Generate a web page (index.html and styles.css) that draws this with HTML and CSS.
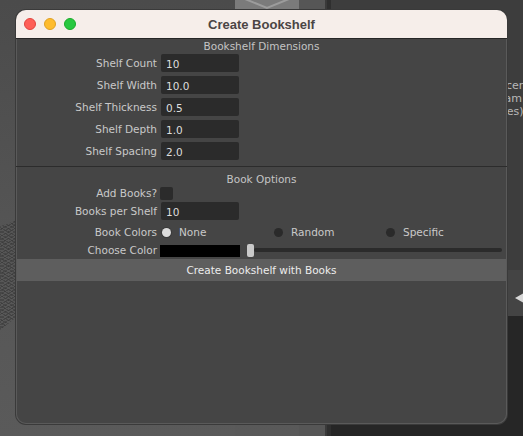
FILE: index.html
```html
<!DOCTYPE html>
<html>
<head>
<meta charset="utf-8">
<link rel="stylesheet" href="styles.css">
</head>
<body>
<div class="desktop">
  <div class="bg-left"></div>
  <div class="bg-mesh"></div>
  <div class="bg-tab">
    <svg width="64" height="10" viewBox="0 0 64 10"><polyline points="10,-1 32,8 54,-1" fill="none" stroke="#9c9c9c" stroke-width="2"/></svg>
  </div>
  <div class="bg-mid"></div>
  <div class="bg-divider"></div>
  <div class="bg-right">
    <div class="bg-right-top">
      <span class="side-text t1">Scen</span>
      <span class="side-text t2">Param</span>
      <span class="side-text t3">odes)</span>
    </div>
    <div class="bg-right-strip"><span class="arrow"></span></div>
    <div class="bg-right-bottom"></div>
  </div>

  <div class="window">
    <div class="titlebar">
      <div class="lights">
        <span class="light red"></span>
        <span class="light yellow"></span>
        <span class="light green"></span>
      </div>
      <div class="title">Create Bookshelf</div>
    </div>
    <div class="content">
      <div class="section-head first">Bookshelf Dimensions</div>
      <div class="form">
        <label class="lbl">Shelf Count</label><div class="field">10</div>
        <label class="lbl">Shelf Width</label><div class="field">10.0</div>
        <label class="lbl">Shelf Thickness</label><div class="field">0.5</div>
        <label class="lbl">Shelf Depth</label><div class="field">1.0</div>
        <label class="lbl">Shelf Spacing</label><div class="field">2.0</div>
      </div>
      <div class="separator"></div>
      <div class="section-head second">Book Options</div>
      <div class="row row-check">
        <label class="lbl">Add Books?</label><span class="checkbox"></span>
      </div>
      <div class="row row-field">
        <label class="lbl">Books per Shelf</label><div class="field">10</div>
      </div>
      <div class="row row-radio">
        <label class="lbl">Book Colors</label>
        <div class="radios">
          <span class="radio-opt"><span class="radio on"></span>None</span>
          <span class="radio-opt"><span class="radio"></span>Random</span>
          <span class="radio-opt"><span class="radio"></span>Specific</span>
        </div>
      </div>
      <div class="row row-color">
        <label class="lbl">Choose Color</label>
        <span class="swatch"></span>
        <div class="slider"><span class="handle"></span><span class="track"></span></div>
      </div>
      <div class="button">Create Bookshelf with Books</div>
    </div>
  </div>
</div>
</body>
</html>
```

FILE: styles.css
```css
* { box-sizing: border-box; }
html, body { margin: 0; padding: 0; }
body {
  width: 523px;
  height: 436px;
  overflow: hidden;
  background: #4f4f4f;
  font-family: "DejaVu Sans", "Liberation Sans", sans-serif;
}
.desktop {
  position: relative;
  width: 523px;
  height: 436px;
  overflow: hidden;
  background: linear-gradient(180deg, #4c4c4c 0%, #555 50%, #595959 100%);
}
.bg-left { position: absolute; left: 0; top: 0; width: 235px; height: 436px; background: linear-gradient(180deg, #4b4b4b, #565656 60%, #5a5a5a); }
.bg-mesh {
  position: absolute; left: 0; top: 220px; width: 17px; height: 110px;
  background:
    repeating-linear-gradient(28deg, rgba(50,50,50,0.45) 0 1px, transparent 1px 3px),
    repeating-linear-gradient(-28deg, rgba(50,50,50,0.45) 0 1px, transparent 1px 3px);
  clip-path: polygon(0 6%, 100% 0, 100% 88%, 0 100%);
}
.bg-tab { position: absolute; left: 235px; top: 0; width: 64px; height: 10px; background: #7b7b7b; }
.bg-tab svg { display: block; }
.bg-mid { position: absolute; left: 299px; top: 0; width: 26px; height: 436px; background: #565656; }
.bg-divider { position: absolute; left: 325px; top: 0; width: 6px; height: 436px; background: #2f2f2f; border-left: 2px solid #3a3a3a; }
.bg-right { position: absolute; left: 331px; top: 0; width: 192px; height: 436px; display: flex; flex-direction: column; }
.bg-right-top { height: 270px; background: #3d3d3d; position: relative; overflow: hidden; }
.side-text {
  position: absolute;
  font-size: 11px; line-height: 13px; color: #b8b8b8;
  white-space: nowrap;
}
.t1 { left: 168px; top: 79px; }
.t2 { left: 156px; top: 92px; }
.t3 { left: 162px; top: 105px; }
.bg-right-strip { height: 46px; background: #444; position: relative; }
.arrow {
  position: absolute; left: 184px; top: 23px;
  width: 0; height: 0;
  border-top: 5px solid transparent; border-bottom: 5px solid transparent;
  border-right: 9px solid #d8d8d8;
}
.bg-right-bottom { flex: 1; background: #262626; }

.window {
  position: absolute;
  left: 16px; top: 10px;
  width: 491px; height: 414px;
  border-radius: 10px;
  overflow: hidden;
  background: #454545;
  box-shadow: 0 0 0 1px #3a3a3a, inset 0 0 0 1px #5a5a5a;
  display: flex; flex-direction: column;
  z-index: 2;
}
.titlebar {
  height: 29px;
  flex: none;
  background: #f6eeea;
  border-bottom: 1px solid #262626;
  position: relative;
  display: flex; align-items: center; justify-content: center;
}
.lights { position: absolute; left: 8px; top: 8px; display: flex; gap: 8px; }
.light { width: 12px; height: 12px; border-radius: 50%; display: block; }
.red { background: #fe5f57; border: 0.5px solid #e0443e; }
.yellow { background: #febc2e; border: 0.5px solid #dea123; }
.green { background: #28c840; border: 0.5px solid #1aab29; }
.title {
  font-family: "Liberation Sans", Arial, sans-serif;
  font-weight: bold;
  font-size: 13px;
  color: #4b4544;
  margin-top: 1px;
}
.content {
  flex: 1;
  display: flex; flex-direction: column;
  font-size: 10.5px;
  color: #c9c9c9;
}
.section-head { text-align: center; height: 15px; line-height: 15px; color: #c4c4c4; }
.form {
  display: grid;
  grid-template-columns: 141px 78px;
  column-gap: 4px;
  row-gap: 4px;
  grid-auto-rows: 18px;
}
.lbl { text-align: right; display: flex; align-items: center; justify-content: flex-end; white-space: nowrap; }
.field {
  background: #2b2b2b;
  border-radius: 2px;
  color: #dedede;
  padding-left: 5px;
  display: flex; align-items: center;
  padding-top: 1px;
}
.separator { margin-top: 6px; height: 1px; background: #2c2c2c; }
.section-head.second { margin-top: 5px; height: 14px; line-height: 14px; }
.row {
  display: grid;
  grid-template-columns: 141px auto 1fr;
  column-gap: 3px;
  align-items: center;
}
.row-check { height: 14px; margin-top: 0; }
.checkbox { width: 13px; height: 13px; background: #2b2b2b; border-radius: 2px; display: block; }
.row-field { margin-top: 2px; height: 18px; grid-template-columns: 141px 78px; column-gap: 4px; }
.row-field .field { height: 18px; }
.row-radio { margin-top: 2px; height: 20px; grid-template-columns: 141px 1fr; column-gap: 5px; }
.radios { display: flex; }
.radio-opt { width: 112px; display: flex; align-items: center; gap: 8px; }
.radio { width: 9px; height: 9px; border-radius: 50%; background: #2a2a2a; display: block; flex: none; }
.radio.on { background: #dcdcdc; box-shadow: 0 0 0 1px #3a3a3a; }
.row-color { height: 16px; margin-top: 0; grid-template-columns: 141px 80px 1fr; column-gap: 3px; }
.swatch { display: block; height: 12px; background: #000; margin-top: 1px; }
.slider { display: flex; align-items: center; height: 16px; padding-right: 5px; margin-left: 4px; }
.handle { width: 7px; height: 13px; background: #c9c9c9; border-radius: 2px; display: block; flex: none; }
.track { flex: 1; height: 4px; background: #2b2b2b; border-radius: 2px; display: block; }
.button {
  margin-top: 1px;
  height: 22px;
  background: #5e5e5e;
  color: #ededed;
  text-align: center;
  line-height: 22px;
  margin-left: 1px;
  margin-right: 1px;
}
```
